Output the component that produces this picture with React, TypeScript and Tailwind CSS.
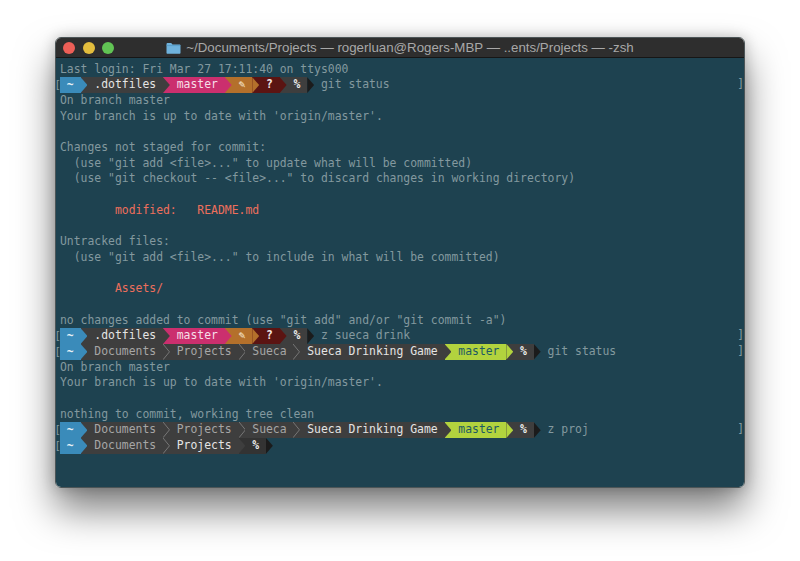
import React from 'react';

type Seg =
    | { kind: 'text'; text: string; bg: string; fg: string }
    | { kind: 'arrow'; from: string; to: string }
    | { kind: 'chevron' };

const BLUE = 'bg-[#3a8bba]';
const GRAY = 'bg-[#3e3e3e]';
const PINK = 'bg-[#cb2f6e]';
const ORANGE = 'bg-[#b4702b]';
const RED = 'bg-[#5b1412]';
const GREEN = 'bg-[#b2d33e]';
const DARK = 'bg-[#333333]';
const BLACK = 'bg-[#1b1b1b]';
const NONE = 'bg-transparent';

const text = (text: string, bg: string, fg: string): Seg => ({ kind: 'text', text, bg, fg });
const arrow = (from: string, to: string): Seg => ({ kind: 'arrow', from, to });
const chevron: Seg = { kind: 'chevron' };

const home = [text(' ~ ', BLUE, 'text-[#e8f2f7] font-bold'), arrow(BLUE, GRAY)];
const dim = 'text-[#a6a6a6]';
const bright = 'text-[#e4e4e4]';

const endPrompt = [text(' % ', GRAY, 'text-[#ececec] font-bold'), arrow(BLACK, NONE)];

const dotfiles: Seg[] = [
    ...home,
    text(' .dotfiles ', GRAY, bright),
    arrow(GRAY, PINK),
    text(' master ', PINK, 'text-[#f6dfe8]'),
    arrow(PINK, ORANGE),
    text(' ✎ ', ORANGE, 'text-[#f7ead6]'),
    arrow(ORANGE, RED),
    text(' ? ', RED, 'text-[#f0e4e4] font-bold'),
    arrow(RED, GRAY),
    ...endPrompt,
];

const sueca: Seg[] = [
    ...home,
    text(' Documents ', GRAY, dim),
    chevron,
    text(' Projects ', GRAY, dim),
    chevron,
    text(' Sueca ', GRAY, dim),
    chevron,
    text(' Sueca Drinking Game ', GRAY, bright),
    arrow(GRAY, GREEN),
    text(' master ', GREEN, 'text-[#1d5a63]'),
    arrow(GREEN, GRAY),
    ...endPrompt,
];

const projects: Seg[] = [
    ...home,
    text(' Documents ', GRAY, dim),
    chevron,
    text(' Projects ', GRAY, bright),
    arrow(GRAY, DARK),
    text(' % ', DARK, 'text-[#ececec] font-bold'),
    arrow(BLACK, NONE),
];

type Line =
    | { type: 'out'; text: string; red?: boolean }
    | { type: 'prompt'; segs: Seg[]; cmd?: string; closed?: boolean };

const out = (text: string, red?: boolean): Line => ({ type: 'out', text, red });
const prompt = (segs: Seg[], cmd?: string, closed = true): Line => ({ type: 'prompt', segs, cmd, closed });

const lines: Line[] = [
    out('Last login: Fri Mar 27 17:11:40 on ttys000'),
    prompt(dotfiles, 'git status'),
    out('On branch master'),
    out("Your branch is up to date with 'origin/master'."),
    out(''),
    out('Changes not staged for commit:'),
    out('  (use "git add <file>..." to update what will be committed)'),
    out('  (use "git checkout -- <file>..." to discard changes in working directory)'),
    out(''),
    out('        modified:   README.md', true),
    out(''),
    out('Untracked files:'),
    out('  (use "git add <file>..." to include in what will be committed)'),
    out(''),
    out('        Assets/', true),
    out(''),
    out('no changes added to commit (use "git add" and/or "git commit -a")'),
    prompt(dotfiles, 'z sueca drink'),
    prompt(sueca, 'git status'),
    out('On branch master'),
    out("Your branch is up to date with 'origin/master'."),
    out(''),
    out('nothing to commit, working tree clean'),
    prompt(sueca, 'z proj'),
    prompt(projects, undefined, false),
];

const Segment: React.FC<{ seg: Seg }> = ({ seg }) => {
    if (seg.kind === 'text') {
        return <span className={`${seg.bg} ${seg.fg} h-full`}>{seg.text}</span>;
    }
    if (seg.kind === 'arrow') {
        return (
            <span className={`${seg.to} block h-full w-[1ch] shrink-0`}>
                <span className={`${seg.from} block h-full w-full [clip-path:polygon(0_0,100%_50%,0_100%)]`} />
            </span>
        );
    }
    return (
        <span className="block h-full w-[1ch] shrink-0 bg-[#3e3e3e]">
            <svg viewBox="0 0 7 16" className="block h-full w-full" preserveAspectRatio="none">
                <path d="M0 0L6.6 8L0 16" fill="none" stroke="#787878" strokeWidth="1" />
            </svg>
        </span>
    );
};

const TerminalLine: React.FC<{ line: Line }> = ({ line }) => {
    if (line.type === 'out') {
        return <div className={`h-[15.7px] ${line.red ? 'text-[#ee6f5c]' : 'text-[#83999f]'}`}>{line.text || ' '}</div>;
    }
    return (
        <div className="flex h-[15.7px] items-stretch text-[#83999f]">
            {/* proportional font so the bracket fits the gutter left of the blue segment */}
            <span className="-ml-[4px] w-[4px] shrink-0 font-['Liberation_Sans',sans-serif] text-[#83999f]">[</span>
            {line.segs.map((seg, i) => <Segment key={i} seg={seg} />)}
            {line.cmd && <span className="ml-[1ch]">{line.cmd}</span>}
            {line.closed && <span className="ml-auto -mr-[2px]">]</span>}
        </div>
    );
};

export default function App() {
    return (
        <div className="h-[561px] w-[800px] overflow-hidden bg-white pl-[55px] pt-[37px]">
            <div className="flex h-[451px] w-[690px] flex-col overflow-hidden rounded-[6px] border border-[#4c5557] shadow-[0_22px_38px_rgba(0,0,0,0.5),0_0_14px_rgba(0,0,0,0.22)]">
                <div className="grid h-[20px] shrink-0 grid-cols-[1fr_auto_1fr] items-center border-b border-[#161616] bg-[#2e2e2e]">
                    <div className="flex items-center gap-[7.5px] pl-[7px]">
                        <span className="h-[12px] w-[12px] rounded-full bg-[#ed5f57]" />
                        <span className="h-[12px] w-[12px] rounded-full bg-[#e3bd3d]" />
                        <span className="h-[12px] w-[12px] rounded-full bg-[#61c454]" />
                    </div>
                    <div className="flex items-center gap-[5px] font-['Liberation_Sans',sans-serif] text-[13.3px] text-[#a8a8a8]">
                        <svg viewBox="0 0 15 12" className="h-[12px] w-[15px]">
                            <path d="M0.5 2.2C0.5 1.3 1 1 1.8 1H5.2L6.5 2.4H13.4C14.1 2.4 14.5 2.8 14.5 3.5V10.8C14.5 11.5 14.1 11.8 13.4 11.8H1.6C0.9 11.8 0.5 11.5 0.5 10.8Z" fill="#6fb2dc" />
                            <path d="M0.5 3.6H14.5" stroke="#4f93c0" strokeWidth="0.7" />
                        </svg>
                        <span>~/Documents/Projects — rogerluan@Rogers-MBP — ..ents/Projects — -zsh</span>
                    </div>
                    <div />
                </div>
                <div className="min-h-0 flex-1 whitespace-pre bg-[#1e4250] pl-[4px] pr-[2px] pt-[3.5px] font-['DejaVu_Sans_Mono',monospace] text-[11.41px] leading-[15.7px]">
                    {lines.map((line, i) => <TerminalLine key={i} line={line} />)}
                </div>
            </div>
        </div>
    );
}
